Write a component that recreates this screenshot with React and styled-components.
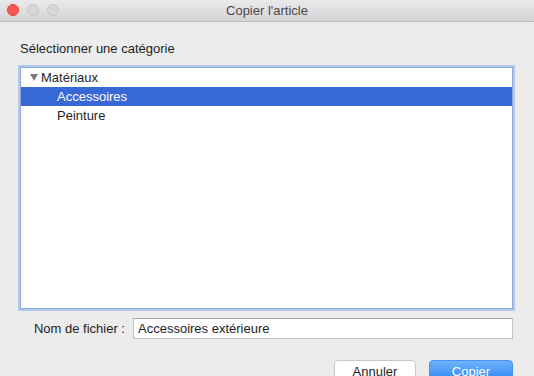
import React from 'react';
import styled, { createGlobalStyle } from 'styled-components';

const GlobalStyle = createGlobalStyle`
  html, body {
    margin: 0;
    padding: 0;
    background: #ececec;
  }
  body {
    font-family: "Liberation Sans", Arial, sans-serif;
    font-size: 13px;
    color: #1e1e1e;
    overflow: hidden;
  }
`;

const Window = styled.div`
  width: 534px;
  height: 376px;
  display: flex;
  flex-direction: column;
  background: #ececec;
  overflow: hidden;
`;

const TitleBar = styled.div`
  height: 21px;
  flex-shrink: 0;
  position: relative;
  display: flex;
  align-items: center;
  justify-content: center;
  background: linear-gradient(#ebe9eb, #d5d3d5);
  border-bottom: 1px solid #b9b9b9;
  color: #4a4a4a;
  font-size: 13px;
`;

const Lights = styled.div`
  position: absolute;
  left: 7px;
  top: 4px;
  display: flex;
  gap: 8px;
`;

const Light = styled.span`
  width: 12px;
  height: 12px;
  border-radius: 50%;
  background: ${p => p.$color};
  box-sizing: border-box;
  border: 1px solid ${p => p.$edge};
`;

const Content = styled.div`
  flex: 1;
  padding: 19px 21px 0 20px;
  display: flex;
  flex-direction: column;
`;

const Label = styled.div`
  line-height: 16px;
  margin-bottom: 10px;
`;

const Tree = styled.div`
  height: 242px;
  background: #fff;
  border: 1px solid #8eabdc;
  box-shadow: 0 0 0 2px #b4c9ec;
  box-sizing: border-box;
  padding-top: 0;
`;

const Row = styled.div`
  height: 19px;
  display: flex;
  align-items: center;
  padding-left: ${p => p.$indent}px;
  background: ${p => (p.$selected ? '#3867d6' : 'transparent')};
  color: ${p => (p.$selected ? '#fff' : '#1e1e1e')};
`;

const Disclosure = styled.span`
  width: 0;
  height: 0;
  border-left: 4px solid transparent;
  border-right: 4px solid transparent;
  border-top: 7px solid #7d7d7d;
  margin-right: 3px;
`;

const FileRow = styled.div`
  display: flex;
  align-items: center;
  margin-top: 9px;
`;

const FileLabel = styled.label`
  width: 105px;
  text-align: right;
  margin-right: 8px;
`;

const FileInput = styled.div`
  flex: 1;
  height: 21px;
  box-sizing: border-box;
  background: #fff;
  border: 1px solid #c3c3c3;
  border-top-color: #a8a8a8;
  padding: 0 4px;
  display: flex;
  align-items: center;
`;

const Buttons = styled.div`
  display: flex;
  justify-content: flex-end;
  gap: 13px;
  margin-top: 21px;
`;

const Button = styled.button`
  width: ${p => p.$width}px;
  height: 22px;
  border-radius: 4px;
  font-family: "Liberation Sans", Arial, sans-serif;
  font-size: 13px;
  padding: 0;
  cursor: pointer;
  border: 1px solid ${p => (p.$primary ? '#4a8ef0' : '#c8c8c8')};
  background: ${p => (p.$primary ? 'linear-gradient(#6cb3fa, #2f86f6)' : '#fff')};
  color: ${p => (p.$primary ? '#fff' : '#1e1e1e')};
`;

export default function App() {
  return (
    <Window>
      <GlobalStyle />
      <TitleBar>
        <Lights>
          <Light $color="#fc5753" $edge="#df3d39" />
          <Light $color="#d9d7d9" $edge="#c6c4c6" />
          <Light $color="#d9d7d9" $edge="#c6c4c6" />
        </Lights>
        Copier l'article
      </TitleBar>
      <Content>
        <Label>Sélectionner une catégorie</Label>
        <Tree>
          <Row $indent={9}>
            <Disclosure />
            Matériaux
          </Row>
          <Row $indent={36} $selected>Accessoires</Row>
          <Row $indent={36}>Peinture</Row>
        </Tree>
        <FileRow>
          <FileLabel>Nom de fichier :</FileLabel>
          <FileInput>Accessoires extérieure</FileInput>
        </FileRow>
        <Buttons>
          <Button $width={82}>Annuler</Button>
          <Button $width={84} $primary>Copier</Button>
        </Buttons>
      </Content>
    </Window>
  );
}
